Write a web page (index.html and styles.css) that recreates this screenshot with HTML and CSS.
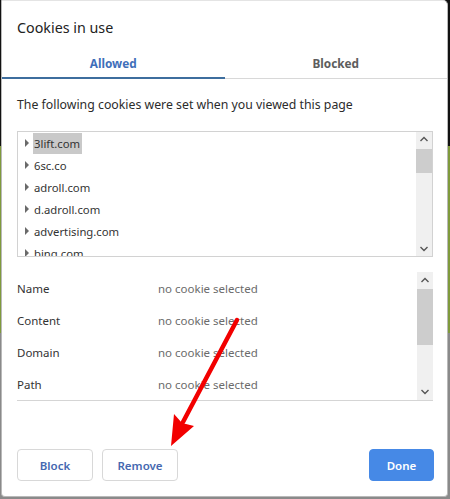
FILE: index.html
```html
<!DOCTYPE html>
<html lang="en">
<head>
  <meta charset="UTF-8" />
  <title>Cookies in use</title>
  <link rel="stylesheet" href="styles.css">
</head>
<body>
  <div class="dialog">
    <div class="title">Cookies in use</div>
    <div class="tabs">
      <div class="tab active">Allowed</div>
      <div class="tab">Blocked</div>
    </div>

    <div class="content">
      <p class="intro">The following cookies were set when you viewed this page</p>

      <div class="tree">
        <ul class="tree_list">
          <li><span class="caret"></span><span class="site selected">3lift.com</span></li>
          <li><span class="caret"></span><span class="site">6sc.co</span></li>
          <li><span class="caret"></span><span class="site">adroll.com</span></li>
          <li><span class="caret"></span><span class="site">d.adroll.com</span></li>
          <li><span class="caret"></span><span class="site">advertising.com</span></li>
          <li><span class="caret"></span><span class="site">bing.com</span></li>
        </ul>
        <div class="scrollbar tree_scroll">
          <svg class="chev" width="16" height="14" viewBox="0 0 16 14"><polyline points="4.5,9 8,5.5 11.5,9" /></svg>
          <div class="thumb"></div>
          <div class="track"></div>
          <svg class="chev" width="16" height="14" viewBox="0 0 16 14"><polyline points="4.5,5 8,8.5 11.5,5" /></svg>
        </div>
      </div>

      <div class="details">
        <div class="detail_rows">
          <div class="row"><span class="label">Name</span><span class="value">no cookie selected</span></div>
          <div class="row"><span class="label">Content</span><span class="value">no cookie selected</span></div>
          <div class="row"><span class="label">Domain</span><span class="value">no cookie selected</span></div>
          <div class="row"><span class="label">Path</span><span class="value">no cookie selected</span></div>
        </div>
        <div class="scrollbar details_scroll">
          <svg class="chev" width="16" height="16" viewBox="0 0 16 16"><polyline points="4.5,10 8,6.5 11.5,10" /></svg>
          <div class="thumb"></div>
          <div class="track"></div>
          <svg class="chev" width="16" height="16" viewBox="0 0 16 16"><polyline points="4.5,6 8,9.5 11.5,6" /></svg>
        </div>
      </div>
    </div>

    <div class="footer">
      <button class="btn">Block</button>
      <button class="btn">Remove</button>
      <span class="spacer"></span>
      <button class="btn primary">Done</button>
    </div>

    <!-- red annotation arrow drawn over the dialog -->
    <svg class="arrow" width="450" height="499" viewBox="0 0 450 499">
      <line x1="236" y1="320" x2="182" y2="422" stroke="#f20000" stroke-width="4.5" stroke-linecap="round" />
      <polygon points="170,446 173,414 181,423 193,426" fill="#f20000" />
    </svg>
  </div>
</body>
</html>
```

FILE: styles.css
```css
body {
  margin: 0;
  width: 450px;
  height: 499px;
  overflow: hidden;
  background: linear-gradient(to bottom, #111 0, #111 146px, #7f9a3c 146px, #7f9a3c 333px, #8a8a8a 333px);
  font-family: "Noto Sans", "Open Sans", sans-serif;
}

.dialog {
  position: relative;
  margin-left: 1px;
  width: 445px;
  height: 495px;
  background-color: #fff;
  border: 1px solid #b9b9b9;
  border-top-color: #e4e4e4;
  border-radius: 0 5px 4px 4px;
}

.title {
  padding: 17px 0 0 15px;
  font-size: 14.3px;
  line-height: 20px;
  color: #222;
}

.tabs {
  display: flex;
  margin-top: 8px;
  border-bottom: 1px solid #d8d8d8;
}

.tab {
  flex: 1;
  text-align: center;
  font-size: 11.8px;
  font-weight: bold;
  line-height: 18px;
  padding: 8px 0 5px;
  color: #5d5d5d;
  border-bottom: 2px solid transparent;
  margin-bottom: -1px;
}

.tab.active {
  color: #3f6fba;
  border-bottom-color: #3e6e9e;
}

.content {
  padding: 0 14px 0 15px;
}

.intro {
  margin: 17px 0 17px;
  font-size: 12.3px;
  line-height: 18px;
  color: #2c2c2c;
}

.tree {
  display: flex;
  height: 124px;
  border: 1px solid #d2d2d2;
  overflow: hidden;
}

.tree_list {
  flex: 1;
  margin: 0;
  padding: 0 0 0 6px;
  list-style: none;
  font-size: 11.3px;
  color: #333;
}

.tree_list li {
  display: flex;
  align-items: center;
  height: 22px;
}

.caret {
  width: 0;
  height: 0;
  margin: 0 4px 0 1px;
  border-top: 4px solid transparent;
  border-bottom: 4px solid transparent;
  border-left: 4px solid #6a6a6a;
}

.site {
  padding: 2px 2px 2px 1px;
  line-height: 17px;
}

.site.selected {
  background-color: #c9c9c9;
}

.scrollbar {
  display: flex;
  flex-direction: column;
  width: 16px;
  background-color: #f0f0f0;
}

.chev {
  display: block;
  flex: none;
}

.chev polyline {
  fill: none;
  stroke: #555;
  stroke-width: 1.4;
}

.thumb {
  background-color: #cdcdcd;
}

.track {
  flex: 1;
}

.tree_scroll .thumb {
  height: 24px;
  margin-top: 3px;
}

.details {
  display: flex;
  margin-top: 15px;
  height: 128px;
  border-bottom: 1px solid #d5d5d5;
}

.detail_rows {
  flex: 1;
}

.row {
  display: flex;
  align-items: center;
  height: 32px;
  font-size: 11.5px;
}

.label {
  width: 141px;
  color: #333;
}

.value {
  color: #6b6b6b;
}

.details_scroll {
  height: 128px;
}

.details_scroll .thumb {
  height: 56px;
  margin-top: 1px;
}

.footer {
  display: flex;
  gap: 9px;
  padding: 48px 13px 0 15px;
}

.spacer {
  flex: 1;
}

.btn {
  height: 32px;
  width: 76px;
  border: 1px solid #d8d8d8;
  border-radius: 4px;
  background-color: #fff;
  color: #4568b0;
  font-family: "Noto Sans", "Open Sans", sans-serif;
  font-size: 11.5px;
  font-weight: 600;
}

.btn.primary {
  width: 65px;
  background-color: #4689e6;
  border-color: #4689e6;
  color: #fff;
}

.arrow {
  position: absolute;
  left: -1px;
  top: -1px;
  pointer-events: none;
}
```
